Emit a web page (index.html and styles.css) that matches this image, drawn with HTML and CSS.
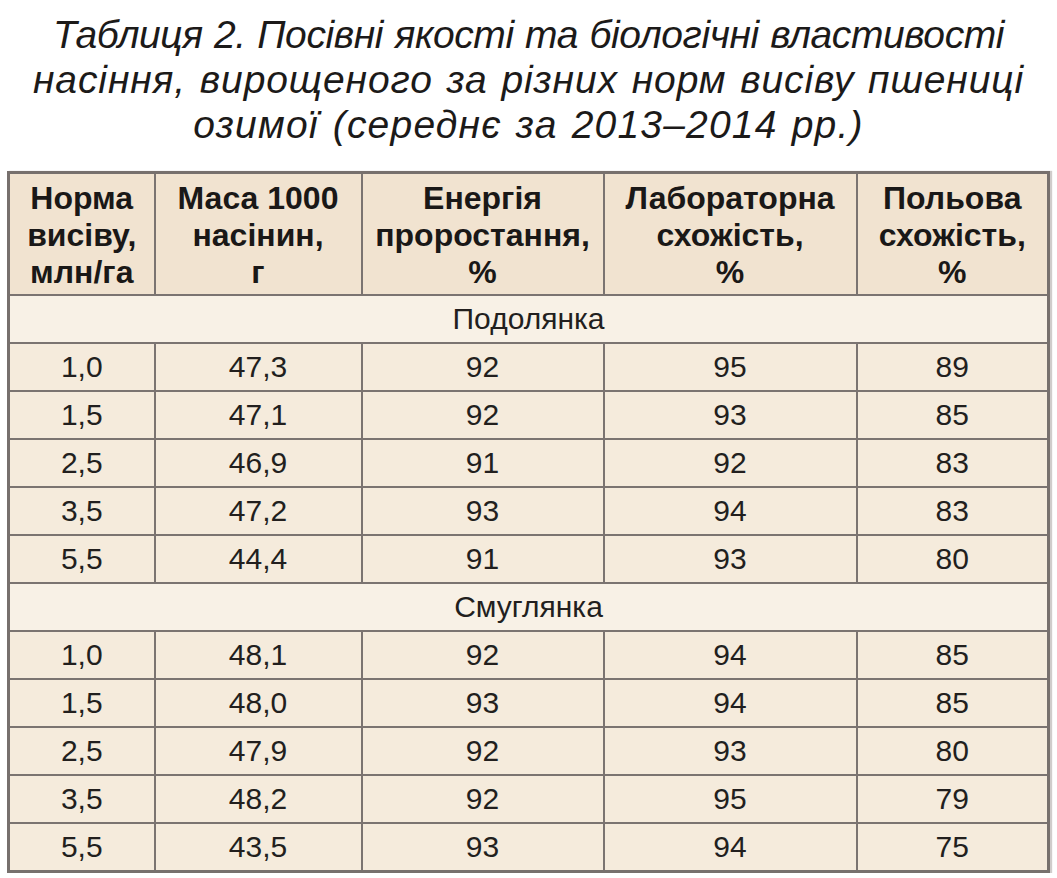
FILE: index.html
```html
<!DOCTYPE html>
<html lang="uk">
<head>
<meta charset="utf-8">
<title>Таблиця 2</title>
<link rel="stylesheet" href="styles.css">
</head>
<body>
<div class="page">
  <h1 class="caption">
    <span class="line line-1">Таблиця 2. Посівні якості та біологічні властивості</span>
    <span class="line line-2">насіння, вирощеного за різних норм висіву пшениці</span>
    <span class="line line-3">озимої (середнє за 2013–2014 рр.)</span>
  </h1>
  <table class="data">
    <colgroup>
      <col class="c1"><col class="c2"><col class="c3"><col class="c4"><col class="c5">
    </colgroup>
    <thead>
      <tr class="head">
        <th>Норма<br>висіву,<br>млн/га</th>
        <th>Маса 1000<br>насінин,<br>г</th>
        <th>Енергія<br>проростання,<br>%</th>
        <th>Лабораторна<br>схожість,<br>%</th>
        <th>Польова<br>схожість,<br>%</th>
      </tr>
    </thead>
    <tbody>
      <tr class="group"><td colspan="5">Подолянка</td></tr>
      <tr><td>1,0</td><td>47,3</td><td>92</td><td>95</td><td>89</td></tr>
      <tr><td>1,5</td><td>47,1</td><td>92</td><td>93</td><td>85</td></tr>
      <tr><td>2,5</td><td>46,9</td><td>91</td><td>92</td><td>83</td></tr>
      <tr><td>3,5</td><td>47,2</td><td>93</td><td>94</td><td>83</td></tr>
      <tr><td>5,5</td><td>44,4</td><td>91</td><td>93</td><td>80</td></tr>
      <tr class="group"><td colspan="5">Смуглянка</td></tr>
      <tr><td>1,0</td><td>48,1</td><td>92</td><td>94</td><td>85</td></tr>
      <tr><td>1,5</td><td>48,0</td><td>93</td><td>94</td><td>85</td></tr>
      <tr><td>2,5</td><td>47,9</td><td>92</td><td>93</td><td>80</td></tr>
      <tr><td>3,5</td><td>48,2</td><td>92</td><td>95</td><td>79</td></tr>
      <tr><td>5,5</td><td>43,5</td><td>93</td><td>94</td><td>75</td></tr>
    </tbody>
  </table>
</div>
</body>
</html>
```

FILE: styles.css
```css
html, body {
  margin: 0;
  padding: 0;
  background: #ffffff;
}

body {
  font-family: "Liberation Sans", Arial, sans-serif;
  color: #1c1a19;
}

.page {
  width: 1057px;
  padding-top: 12px;
}

.caption {
  margin: 0;
  font-size: 39px;
  line-height: 45px;
  font-weight: normal;
  font-style: italic;
  text-align: center;
  letter-spacing: 0.5px;
  word-spacing: 2px;
  color: #1c1a19;
}

.caption .line {
  display: block;
}

.caption .line-1 {
  letter-spacing: -0.4px;
  word-spacing: 1px;
}

.caption .line-2 {
  letter-spacing: 0.9px;
}

.caption .line-3 {
  letter-spacing: 1.2px;
}

.data {
  margin: 24px 0 0 7px;
  width: 1040px;
  table-layout: fixed;
  border-collapse: collapse;
  border: 3px solid #77706d;
  box-shadow: 2px 0 1px rgba(120, 110, 105, 0.35);
}

.c1 { width: 146px; }
.c2 { width: 207px; }
.c3 { width: 242px; }
.c4 { width: 253px; }
.c5 { width: 192px; }

.data th,
.data td {
  border: 2px solid #7b7471;
  padding: 0;
  text-align: center;
  vertical-align: middle;
}

.data th {
  background: #f1e3d0;
  font-size: 32px;
  line-height: 37px;
  font-weight: bold;
  height: 118px;
  padding-top: 2px;
  color: #1a1817;
}

.data td {
  background: #f5ebdc;
  font-size: 30px;
  line-height: 32px;
  height: 46px;
  color: #221f1e;
}

.data .group td {
  background: #f8f1e6;
}
```
